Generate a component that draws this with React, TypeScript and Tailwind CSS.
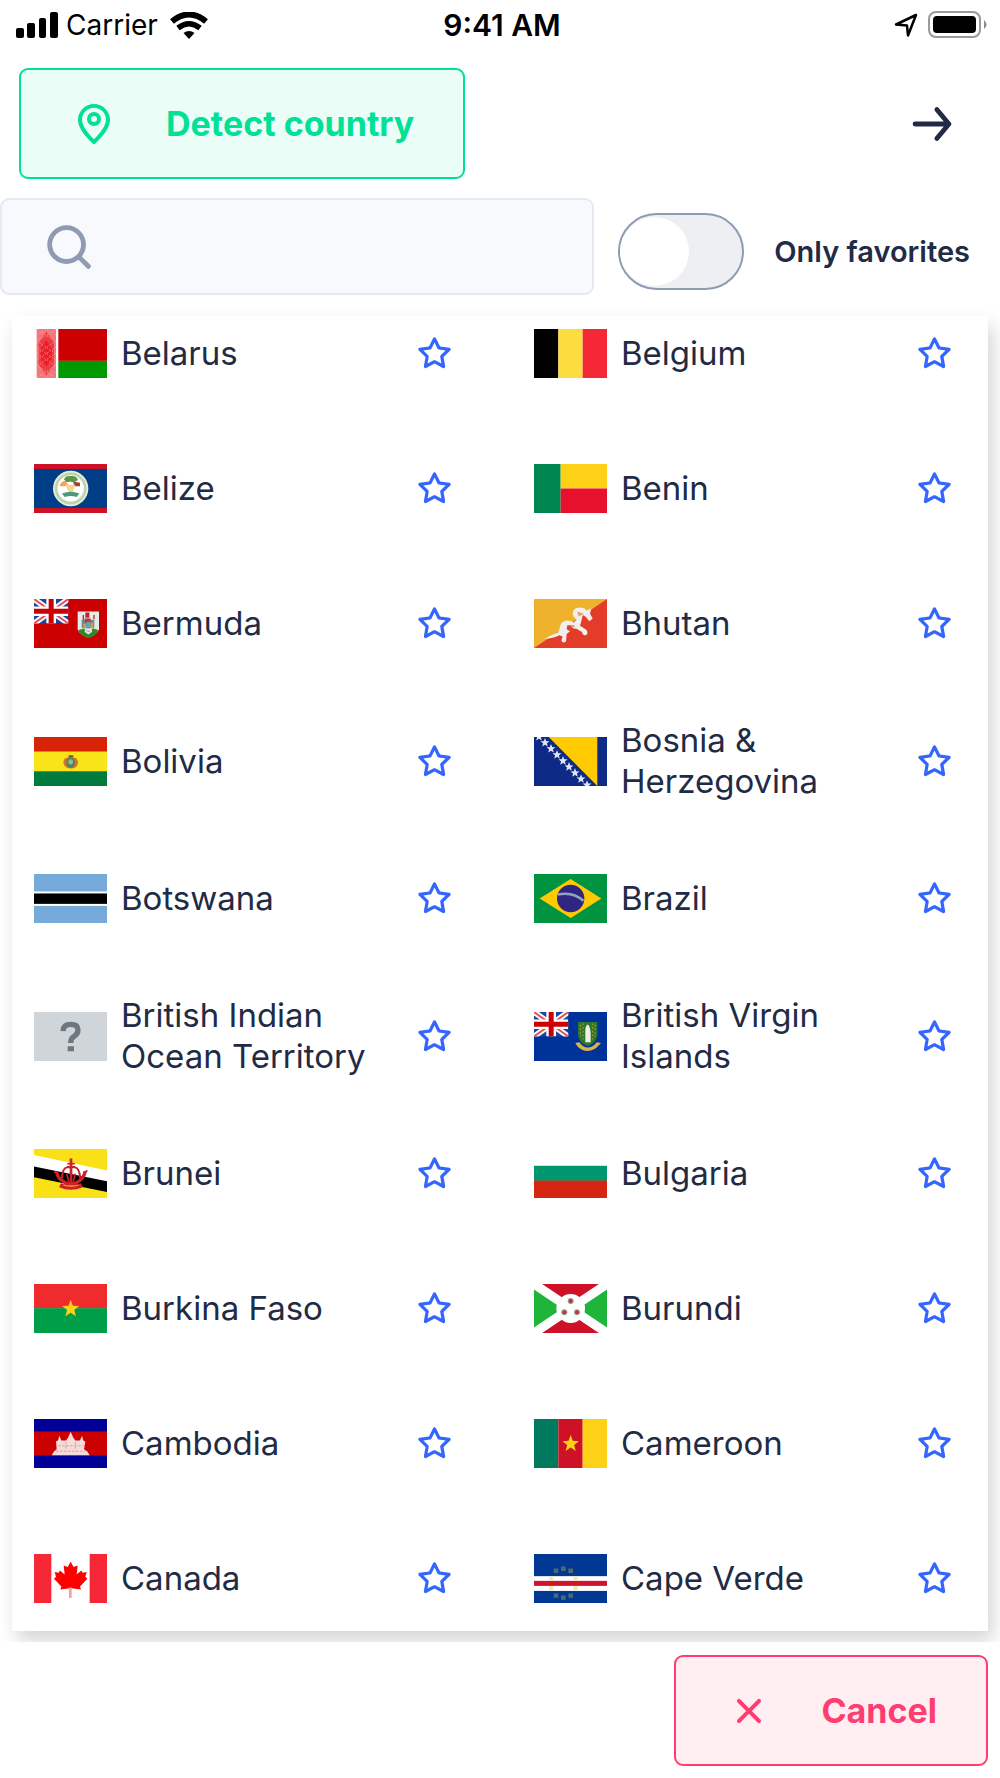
import React, { useState } from 'react'

// Flags are drawn on a shared 219 x 146 canvas
const starPoints = (cx: number, cy: number, r: number) =>
  Array.from({ length: 10 }, (_, i) => {
    const radius = i % 2 === 0 ? r : r * 0.42
    const angle = (Math.PI / 5) * i - Math.PI / 2
    return `${cx + radius * Math.cos(angle)},${cy + radius * Math.sin(angle)}`
  }).join(' ')

const UnionJack = ({ base }: { base: string }) => (
  <svg x="0" y="0" width="103" height="73" viewBox="0 0 103 73" preserveAspectRatio="none">
    <rect width="103" height="73" fill={base} />
    <path d="M0 0L103 73M103 0L0 73" stroke="#fff" strokeWidth="17" />
    <path d="M0 0L103 73M103 0L0 73" stroke="#e8505a" strokeWidth="6" />
    <path d="M51.5 0V73M0 36.5H103" stroke="#fff" strokeWidth="29" />
    <path d="M51.5 0V73M0 36.5H103" stroke="#cc0000" strokeWidth="15" />
  </svg>
)

const flags: Record<string, React.ReactNode> = {
  Belarus: (
    <>
      <rect width="219" height="146" fill="#fff" />
      <rect x="8" width="58" height="146" fill="#f4767b" />
      <path d="M37 8L60 40V106L37 138L14 106V40Z" fill="#ee3c44" />
      <path d="M37 34L54 58V88L37 112L20 88V58Z" fill="#ec1c28" />
      <path
        d="M8 0L66 38M66 0L8 38M8 36L66 74M66 36L8 74M8 72L66 110M66 72L8 110M8 108L66 146M66 108L8 146M8 18L37 0L66 18M8 54L66 92M66 54L8 92M8 128L37 146L66 128"
        fill="none"
        stroke="#f9a3a6"
        strokeWidth="2"
        strokeDasharray="5 4"
      />
      <rect x="73" width="146" height="95" fill="#cc0000" />
      <rect x="73" y="95" width="146" height="51" fill="#009900" />
    </>
  ),
  Belgium: (
    <>
      <rect width="73" height="146" fill="#000" />
      <rect x="73" width="73" height="146" fill="#fddc3f" />
      <rect x="146" width="73" height="146" fill="#f62837" />
    </>
  ),
  Belize: (
    <>
      <rect width="219" height="146" fill="#003f87" />
      <rect width="219" height="15" fill="#ce1126" />
      <rect y="131" width="219" height="15" fill="#ce1126" />
      <circle cx="110" cy="73" r="53" fill="#e6eee0" />
      <circle cx="110" cy="73" r="44" fill="none" stroke="#bcd3ab" strokeWidth="7" />
      <circle cx="110" cy="72" r="38" fill="#fff" />
      <path d="M90 46Q94 34 110 36Q128 34 132 48Q120 58 108 52Q98 58 90 46Z" fill="#5a9748" />
      <path d="M77 64Q80 52 94 50L106 66H80Z" fill="#f0a35e" />
      <path d="M118 52L138 56V66H120Z" fill="#a8412c" />
      <path d="M94 62H124L118 80H102Z" fill="#f5d59c" />
      <path d="M104 82L114 76L122 88H100Z" fill="#e9e26a" />
      <path d="M84 88Q110 78 136 88L128 98Q110 92 92 98Z" fill="#4d9a7a" />
    </>
  ),
  Benin: (
    <>
      <rect width="80" height="146" fill="#008751" />
      <rect x="80" width="139" height="73" fill="#fcd116" />
      <rect x="80" y="73" width="139" height="73" fill="#e8112d" />
    </>
  ),
  Bermuda: (
    <>
      <rect width="219" height="146" fill="#cc0000" />
      <UnionJack base="#1a47a0" />
      <path d="M131 37H195V90Q190 104 163 116Q136 106 131 90Z" fill="#e4ecea" />
      <path d="M154 40H166V56H154ZM146 48H150V64H146ZM178 48H182V60H178Z" fill="#c8202c" />
      <path d="M143 62H181V86H143Z" fill="#708890" />
      <path d="M152 58H170V70H152Z" fill="#b23a3a" />
      <path d="M148 74H156V88H148ZM170 70H178V88H170Z" fill="#c79d63" />
      <path d="M158 68H168V88H158Z" fill="#56a8bd" />
      <path d="M133 92L150 88L163 96L178 88L193 92Q188 108 163 117Q138 108 133 92Z" fill="#34842c" />
      <path d="M152 88L163 98L174 88V98L163 106L152 98Z" fill="#dfe6da" />
    </>
  ),
  Bhutan: (
    <>
      <rect width="219" height="146" fill="#efb22d" />
      <path d="M219 0V146H0Z" fill="#e33d2a" />
      <path
        d="M32 119Q58 104 72 100L78 84Q80 66 98 64Q112 64 120 70L128 60Q116 54 116 40Q120 24 138 26Q150 24 158 34L172 28L168 44L176 58L166 66L154 52L146 48L142 66L138 80L158 92Q164 106 154 108Q146 108 144 98L126 88Q116 90 110 78L100 78L98 90L108 96L98 104L96 126Q88 134 82 124L86 112L76 108Q58 118 32 119Z"
        fill="#f2eeeb"
      />
      <path d="M130 38L150 44L134 52Z" fill="#dfa06e" />
      <path d="M98 78L120 78L122 84Z" fill="#e8785f" />
    </>
  ),
  Bolivia: (
    <>
      <rect width="219" height="44" fill="#d92306" />
      <rect y="44" width="219" height="58" fill="#f8e418" />
      <rect y="102" width="219" height="44" fill="#007a3d" />
      <path d="M88 76Q90 60 102 62L108 54L120 62Q132 62 132 78Q128 94 110 94Q90 92 88 76Z" fill="#d8702a" />
      <ellipse cx="110" cy="76" rx="13" ry="16" fill="#52845b" />
      <ellipse cx="110" cy="74" rx="7" ry="8" fill="#8cbb9d" />
      <path d="M104 57H118" stroke="#705a2e" strokeWidth="5" />
    </>
  ),
  'Bosnia & Herzegovina': (
    <>
      <rect width="219" height="146" fill="#0e2a87" />
      <path d="M44 0H190V146Z" fill="#ffcb00" />
      {[0, 1, 2, 3, 4, 5, 6, 7, 8].map((i) => (
        <polygon key={i} points={starPoints(15 + i * 18, -1 + i * 18, 10)} fill="#e2e6f4" stroke="#e2e6f4" strokeWidth="3" />
      ))}
    </>
  ),
  Botswana: (
    <>
      <rect width="219" height="146" fill="#75aadb" />
      <rect y="52" width="219" height="43" fill="#fff" />
      <rect y="58" width="219" height="31" fill="#000" />
    </>
  ),
  Brazil: (
    <>
      <rect width="219" height="146" fill="#009440" />
      <path d="M110 15L202 73L110 131L17 73Z" fill="#ffcb00" />
      <circle cx="110" cy="73" r="41" fill="#302681" />
      <path d="M72 61Q118 52 148 80" fill="none" stroke="#8fa6c2" strokeWidth="8" />
    </>
  ),
  'British Indian Ocean Territory': (
    <>
      <rect width="219" height="146" fill="#d0d5da" />
      <path d="M87 57Q88 37 110 37Q132 37 132 54Q132 66 120 73Q110 79 110 92" fill="none" stroke="#6d7780" strokeWidth="16" />
      <rect x="101" y="102" width="19" height="15" fill="#6d7780" />
    </>
  ),
  'British Virgin Islands': (
    <>
      <rect width="219" height="146" fill="#003399" />
      <UnionJack base="#1a47a0" />
      <path d="M132 30H190V66Q188 92 161 102Q134 92 132 66Z" fill="#30762d" />
      <path d="M139 38V74M147 34V82M176 34V82M183 38V74" stroke="#b3a431" strokeWidth="3" strokeDasharray="5 6" />
      <path d="M154 52Q156 36 163 38Q170 48 170 68V90H154Z" fill="#eef0e8" />
      <path d="M124 92L136 90Q148 106 161 106Q176 106 188 90L201 92L194 100Q180 116 161 116Q142 116 130 102Z" fill="#d8b24a" />
    </>
  ),
  Brunei: (
    <>
      <rect width="219" height="146" fill="#f9e017" />
      <path d="M0 18L219 64V126L0 82Z" fill="#fff" />
      <path d="M0 52L219 96V128L0 84Z" fill="#000" />
      <g fill="none" stroke="#ce2028">
        <path d="M67 66Q72 90 88 96L96 102H126L134 96Q148 90 154 66" strokeWidth="10" />
        <path d="M111 28V98" strokeWidth="8" />
        <path d="M84 88Q84 58 100 54H122Q138 58 138 88" strokeWidth="6" />
        <path d="M100 44H122" strokeWidth="5" />
        <path d="M78 108Q110 122 144 108" strokeWidth="13" />
        <path d="M60 68L72 74M148 74L160 64M98 74L104 96M124 74L118 96" strokeWidth="5" />
      </g>
      <path d="M88 107Q110 115 134 107" fill="none" stroke="#e8a835" strokeWidth="3" />
    </>
  ),
  Bulgaria: (
    <>
      <rect width="219" height="50" fill="#fff" />
      <rect y="50" width="219" height="45" fill="#00966e" />
      <rect y="94" width="219" height="52" fill="#d62612" />
    </>
  ),
  'Burkina Faso': (
    <>
      <rect width="219" height="73" fill="#ef2b2d" />
      <rect y="72" width="219" height="74" fill="#009e49" />
      <polygon points={starPoints(110, 74, 27)} fill="#fcd116" />
    </>
  ),
  Burundi: (
    <>
      <rect width="219" height="146" fill="#ce1126" />
      <path d="M0 0L110 73L0 146ZM219 0L110 73L219 146Z" fill="#1eb53a" />
      <path d="M0 0L219 146M219 0L0 146" stroke="#fff" strokeWidth="27" />
      <circle cx="110" cy="73" r="43" fill="#fff" />
      {[[110, 51], [91, 84], [129, 84]].map(([x, y]) => (
        <g key={x}>
          <circle cx={x} cy={y} r="9" fill="#9aa886" />
          <circle cx={x} cy={y} r="6" fill="#bf3346" />
        </g>
      ))}
    </>
  ),
  Cambodia: (
    <>
      <rect width="219" height="146" fill="#000099" />
      <rect y="37" width="219" height="72" fill="#cc0000" />
      <path
        d="M53 108L60 97L68 90L66 66L72 64L76 50L82 64H96L102 56L110 38L118 56L124 64H138L144 50L148 64L154 68L150 90L160 97L167 108Z"
        fill="#f5dcdc"
      />
      <path d="M72 80H148M66 96H154M96 68V90M124 68V90" stroke="#e59a9a" strokeWidth="3" strokeDasharray="8 4" />
    </>
  ),
  Cameroon: (
    <>
      <rect width="73" height="146" fill="#007a5e" />
      <rect x="73" width="73" height="146" fill="#ce1126" />
      <rect x="146" width="73" height="146" fill="#fcd116" />
      <polygon points={starPoints(110, 74, 26)} fill="#fcd116" />
    </>
  ),
  Canada: (
    <>
      <rect width="219" height="146" fill="#fff" />
      <rect width="52" height="146" fill="#f62837" />
      <rect x="167" width="52" height="146" fill="#f62837" />
      <path
        d="M110 23L119 39L131 34L128 61L142 49L146 56L158 54L154 68L160 74L138 97L141 106L112 102H108L79 106L82 97L60 74L66 68L62 54L74 56L78 49L92 61L89 34L101 39Z"
        fill="#ff0000"
      />
      <path d="M109 100V131" stroke="#ff9c9c" strokeWidth="8" />
    </>
  ),
  'Cape Verde': (
    <>
      <rect width="219" height="146" fill="#003893" />
      <rect y="66" width="219" height="44" fill="#fff" />
      <rect y="80" width="219" height="15" fill="#cf1430" />
      <path
        d="M59 50H73M81 44H95M103 50H117M59 124H73M81 130H95M103 124H117"
        stroke="#4d6a72"
        strokeWidth="13"
      />
      <path d="M45 73H58M118 73H131M45 101H58M118 101H131" stroke="#fbe9a6" strokeWidth="12" />
    </>
  ),
}

const countries = Object.keys(flags)

const StarIcon = () => (
  <svg viewBox="0 0 24 24" fill="currentColor" className="size-[39px]">
    <path d="M17.56 21a1 1 0 0 1-.46-.11L12 18.22l-5.1 2.67a1 1 0 0 1-1.45-1.06l1-5.63-4.12-4a1 1 0 0 1-.25-1 1 1 0 0 1 .81-.68l5.7-.83 2.51-5.13a1 1 0 0 1 1.8 0l2.54 5.12 5.7.83a1 1 0 0 1 .81.68 1 1 0 0 1-.25 1l-4.12 4 1 5.63a1 1 0 0 1-.4 1 1 1 0 0 1-.62.18zM12 16.1a.92.92 0 0 1 .46.11l3.77 2-.72-4.21a1 1 0 0 1 .29-.89l3-2.93-4.2-.62a1 1 0 0 1-.71-.56L12 5.25 10.11 9a1 1 0 0 1-.75.54l-4.2.62 3 2.93a1 1 0 0 1 .29.89l-.72 4.16 3.77-2a.92.92 0 0 1 .5-.04z" />
  </svg>
)

const StatusBar = () => (
  <div className="grid grid-cols-3 items-center h-[50px] pl-4 pr-3 text-black">
    <div className="flex items-center gap-2">
      <svg viewBox="0 0 42 26" className="w-[42px] h-[26px]">
        <rect y="16" width="8" height="10" rx="2" />
        <rect x="11" y="11" width="8" height="15" rx="2" />
        <rect x="23" y="6" width="7" height="20" rx="2" />
        <rect x="34" width="8" height="26" rx="2" />
      </svg>
      <span className="text-[28px] leading-9">Carrier</span>
      <svg viewBox="0 0 38 27" className="w-[38px] h-[27px] ml-1" fill="none" stroke="#000">
        <path d="M2 9.5Q19 -4.5 36 9.5" strokeWidth="6" />
        <path d="M8 16Q19 7.5 30 16" strokeWidth="5.5" />
        <path d="M13.5 21Q19 17 24.5 21L19 27Z" fill="#000" stroke="none" />
      </svg>
    </div>
    <span className="text-center text-[30px] leading-9 font-semibold">9:41 AM</span>
    <div className="flex items-center justify-end gap-[10px]">
      <svg viewBox="0 0 24 24" className="size-6" fill="none" stroke="#000" strokeWidth="2.5" strokeLinejoin="round">
        <path d="M22 2L2 11.5L13 12.5L14 22.5Z" />
      </svg>
      <svg viewBox="0 0 60 28" className="w-[60px] h-[28px]">
        <rect x="1" y="1" width="51" height="25" rx="7" fill="none" stroke="#9a9a9a" strokeWidth="2" />
        <rect x="5" y="5" width="43" height="17" rx="4" />
        <path d="M56 9Q61 13.5 56 18Z" fill="#8a8a8a" />
      </svg>
    </div>
  </div>
)

const CountryItem = ({ name }: { name: string }) => (
  <li className="flex items-center min-h-[135px] py-[29px]">
    <svg viewBox="0 0 219 146" preserveAspectRatio="none" className="w-[73px] h-[49px] shrink-0">
      {flags[name]}
    </svg>
    <span className="flex-1 px-[14px] text-[33px] leading-[41px]">{name}</span>
    <button type="button" aria-label={`Add ${name} to favorites`} className="text-[#3366ff]">
      <StarIcon />
    </button>
  </li>
)

export default function App() {
  const [query, setQuery] = useState('')
  const [onlyFavorites, setOnlyFavorites] = useState(false)

  return (
    <div className="min-h-screen overflow-hidden bg-white font-['Inter',sans-serif] text-[#222b45]">
      <StatusBar />

      {/* Actions */}
      <header className="flex items-center justify-between mt-[18px] pl-[19px] pr-[39px]">
        <button
          type="button"
          className="flex items-center gap-12 h-[111px] px-[49px] rounded-[9px] border-2 border-[#00e096] bg-[#ebfdf7] text-[#00e096]"
        >
          <svg viewBox="0 0 24 24" fill="currentColor" className="size-12">
            <path d="M12 2a8 8 0 0 0-8 7.92c0 5.48 7.05 11.58 7.35 11.84a1 1 0 0 0 1.3 0C13 21.5 20 15.4 20 9.92A8 8 0 0 0 12 2zm0 17.65c-1.67-1.59-6-6-6-9.73a6 6 0 0 1 12 0c0 3.7-4.33 8.14-6 9.73z" />
            <path d="M12 6a3.5 3.5 0 1 0 3.5 3.5A3.5 3.5 0 0 0 12 6zm0 5a1.5 1.5 0 1 1 1.5-1.5A1.5 1.5 0 0 1 12 11z" />
          </svg>
          <span className="text-[34px] leading-10 font-bold">Detect country</span>
        </button>
        <button type="button" aria-label="Next">
          <svg viewBox="0 0 24 24" fill="currentColor" className="size-[58px]">
            <path d="M5 13h11.86l-3.63 4.36a1 1 0 0 0 1.54 1.28l5-6a1.19 1.19 0 0 0 .09-.15c0-.05.05-.08.07-.13A1 1 0 0 0 20 12a1 1 0 0 0-.07-.36c0-.05-.05-.08-.07-.13a1.19 1.19 0 0 0-.09-.15l-5-6A1 1 0 0 0 14 5a1 1 0 0 0-.64.23 1 1 0 0 0-.13 1.41L16.86 11H5a1 1 0 0 0 0 2z" />
          </svg>
        </button>
      </header>

      {/* Search and filter */}
      <div className="flex items-center gap-6 mt-[19px] pr-[30px]">
        <label className="flex flex-1 items-center h-[97px] pl-[38px] rounded-[9px] border-2 border-[#e4e9f2] bg-[#f7f9fc]">
          <svg viewBox="0 0 24 24" fill="#8f9bb3" className="size-[58px] shrink-0">
            <path d="M20.71 19.29l-3.4-3.39A7.92 7.92 0 0 0 19 11a8 8 0 1 0-8 8 7.92 7.92 0 0 0 4.9-1.69l3.39 3.4a1 1 0 0 0 1.42 0 1 1 0 0 0 0-1.42zM5 11a6 6 0 1 1 6 6 6 6 0 0 1-6-6z" />
          </svg>
          <input
            type="text"
            aria-label="Search country"
            value={query}
            onChange={(e) => setQuery(e.target.value)}
            className="w-full min-w-0 px-4 text-[33px] outline-none"
          />
        </label>
        <label className="flex items-center gap-[30px] mt-[10px]">
          <input
            type="checkbox"
            checked={onlyFavorites}
            onChange={(e) => setOnlyFavorites(e.target.checked)}
            className="appearance-none flex items-center w-[126px] h-[77px] rounded-full border-2 border-[#8f9bb3] bg-[#eeeff3] before:size-[69px] before:rounded-full before:bg-white checked:justify-end"
          />
          <span className="text-[29px] leading-9 font-semibold">Only favorites</span>
        </label>
      </div>

      {/* Country list */}
      <main className="overflow-hidden px-3 pt-[21px] pb-[11px]">
        <div className="overflow-hidden bg-white shadow-[5px_10px_18px_rgba(0,0,0,0.17)]">
          <ul className="grid grid-cols-2 gap-x-20 -mt-[30px] -mb-[15px] pl-[22px] pr-[34px]">
            {countries.map((name) => (
              <CountryItem key={name} name={name} />
            ))}
          </ul>
        </div>
      </main>

      <footer className="flex justify-end px-3 py-[13px]">
        <button
          type="button"
          className="flex items-center gap-12 h-[111px] px-[49px] rounded-[9px] border-2 border-[#ff3d71] bg-[#ffeff3] text-[#ff3d71]"
        >
          <svg viewBox="0 0 24 24" fill="currentColor" className="size-12">
            <path d="M13.41 12l4.3-4.29a1 1 0 1 0-1.42-1.42L12 10.59l-4.29-4.3a1 1 0 0 0-1.42 1.42l4.3 4.29-4.3 4.29a1 1 0 0 0 0 1.42 1 1 0 0 0 1.42 0l4.29-4.3 4.29 4.3a1 1 0 0 0 1.42 0 1 1 0 0 0 0-1.42z" />
          </svg>
          <span className="text-[34px] leading-10 font-bold">Cancel</span>
        </button>
      </footer>
    </div>
  )
}
